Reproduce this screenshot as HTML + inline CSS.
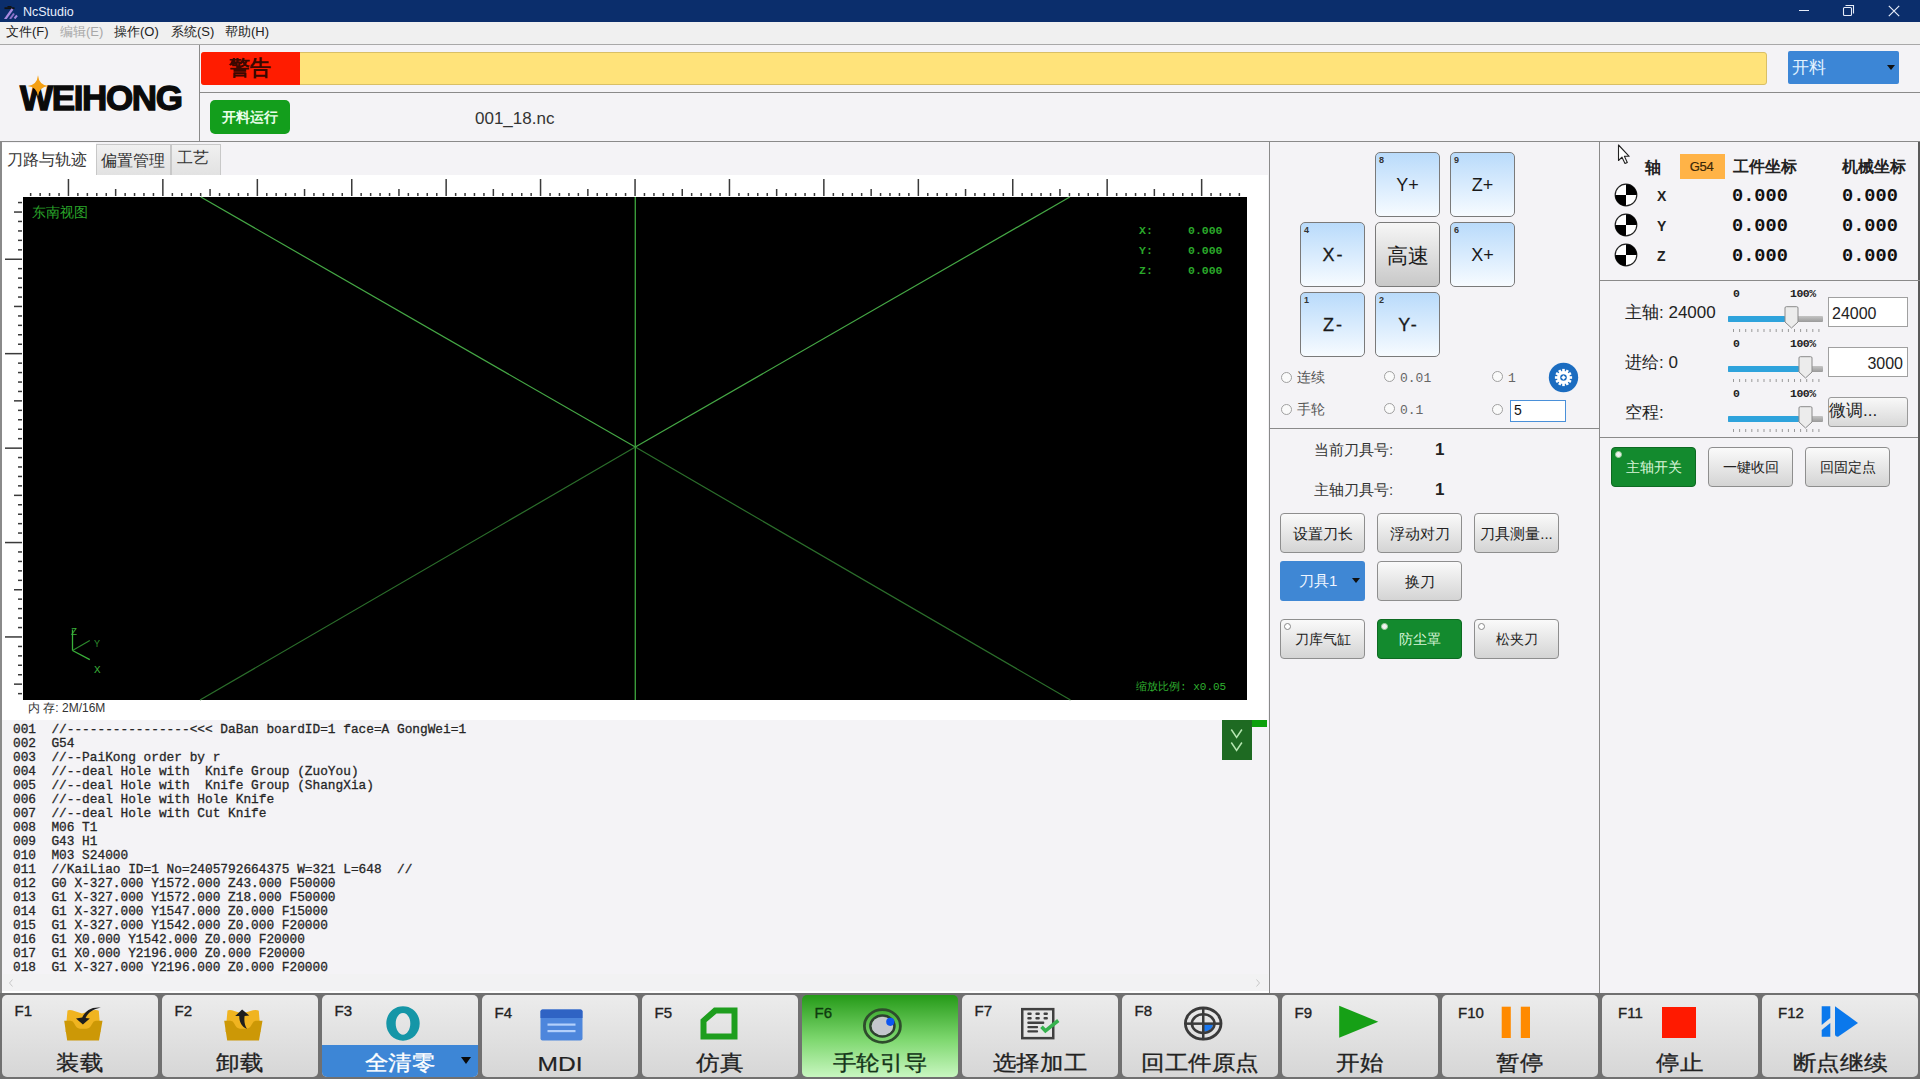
<!DOCTYPE html>
<html><head><meta charset="utf-8">
<style>
*{box-sizing:border-box;margin:0;padding:0}
html,body{width:1920px;height:1079px;overflow:hidden}
body{position:relative;background:#f4f3f6;font-family:"Liberation Sans",sans-serif;color:#222}
.a{position:absolute}
.hl{position:absolute;height:1px;background:#8a8a8a}
.vl{position:absolute;width:1px;background:#8a8a8a}
.mono{font-family:"Liberation Mono",monospace}
.t{position:absolute;white-space:pre;line-height:1}
</style></head><body>
<!-- title bar -->
<div class="a" style="left:0;top:0;width:1920px;height:22px;background:#0b2e6c"></div>
<div class="t" style="left:23px;top:6px;font-size:12.5px;color:#e8eefc">NcStudio</div>
<svg class="a" style="left:2px;top:3px" width="16" height="16" viewBox="0 0 16 16">
<path d="M2.5 5.2 L12.5 5.2" stroke="#111" stroke-width="1.8"/>
<path d="M5.5 3.7 L9.5 3.7" stroke="#111" stroke-width="1.4"/>
<path d="M3 16.5 L10.5 6" stroke="#a88ae0" stroke-width="2.2"/>
<path d="M8 16 L12 10.5" stroke="#8a70c8" stroke-width="2"/>
<path d="M12.5 15.5 L15 12.5" stroke="#a88ae0" stroke-width="2"/></svg>
<div class="a" style="left:1799px;top:10px;width:10px;height:1px;background:#e6ecf8"></div>
<svg class="a" style="left:1842px;top:4px" width="13" height="13" viewBox="0 0 13 13"><path d="M3.5 1.5 L11.5 1.5 L11.5 9.5" fill="none" stroke="#e6ecf8" stroke-width="1.1"/><rect x="1.5" y="3.5" width="8" height="8" rx="1" fill="none" stroke="#e6ecf8" stroke-width="1.1"/></svg>
<svg class="a" style="left:1888px;top:5px" width="12" height="12" viewBox="0 0 12 12"><path d="M0.8 0.8 L11.2 11.2 M11.2 0.8 L0.8 11.2" stroke="#e6ecf8" stroke-width="1.2"/></svg>

<!-- menu -->
<div class="a" style="left:0;top:22px;width:1920px;height:22px;background:#f0f0f0"></div>
<div class="hl" style="left:0;top:44px;width:1920px;background:#a8a8a8"></div>
<div class="t" style="left:6px;top:25px;font-size:13px;color:#222">文件(F)</div>
<div class="t" style="left:60px;top:25px;font-size:13px;color:#a8a8a8">编辑(E)</div>
<div class="t" style="left:114px;top:25px;font-size:13px;color:#222">操作(O)</div>
<div class="t" style="left:171px;top:25px;font-size:13px;color:#222">系统(S)</div>
<div class="t" style="left:225px;top:25px;font-size:13px;color:#222">帮助(H)</div>
<!-- header -->
<div class="vl" style="left:199px;top:45px;height:96px"></div>
<div class="hl" style="left:200px;top:92px;width:1720px"></div>
<div class="hl" style="left:0;top:141px;width:1920px"></div>
<div class="a" style="left:201px;top:52px;width:1566px;height:33px;background:#ffe37a;border-radius:3px;border:1px solid #d9bf66"></div>
<div class="a" style="left:201px;top:52px;width:99px;height:33px;background:#ff1c00;border-radius:3px 0 0 3px"></div>
<div class="t" style="left:229px;top:57px;font-size:21px;font-weight:bold;color:#3a0800">警告</div>
<div class="a" style="left:1788px;top:51px;width:111px;height:33px;background:#3c86d6;border-radius:2px"></div>
<div class="t" style="left:1792px;top:59px;font-size:17px;color:#e2f3ff">开料</div>
<div class="a" style="left:1887px;top:65px;width:0;height:0;border-left:4px solid transparent;border-right:4px solid transparent;border-top:5px solid #111"></div>
<div class="a" style="left:210px;top:100px;width:80px;height:34px;background:#139e1c;border-radius:5px"></div>
<div class="t" style="left:222px;top:110px;font-size:14px;color:#eaffea;font-weight:bold">开料运行</div>
<div class="t" style="left:475px;top:110px;font-size:17px;color:#333">001_18.nc</div>

<!-- logo -->
<div class="t" style="left:20px;top:80px;font-size:35px;font-weight:bold;color:#0a0a0a;letter-spacing:-1.35px;-webkit-text-stroke:1.3px #0a0a0a">WEIHONG</div>
<svg class="a" style="left:27px;top:75px" width="22" height="22" viewBox="-11 -11 22 22"><path d="M0 -10.8 Q0.9 -0.9 10.5 0 Q0.9 0.9 0 10.5 Q-0.9 0.9 -10.5 0 Q-0.9 -0.9 0 -10.8 Z" fill="#f5a012"/></svg>
<!-- tabs -->
<div class="a" style="left:0;top:142px;width:2px;height:851px;background:#8a8a8a"></div>
<div class="a" style="left:96px;top:144px;width:75px;height:31px;background:linear-gradient(#f0f0f0,#e2e2e2);border:1px solid #c8c8c8;border-bottom:none"></div>
<div class="a" style="left:171px;top:144px;width:50px;height:31px;background:linear-gradient(#f0f0f0,#e2e2e2);border:1px solid #c8c8c8;border-bottom:none"></div>
<div class="a" style="left:2px;top:143px;width:94px;height:33px;background:#fff"></div>
<div class="t" style="left:7px;top:152px;font-size:16px;color:#333">刀路与轨迹</div>
<div class="t" style="left:101px;top:153px;font-size:16px;color:#333">偏置管理</div>
<div class="t" style="left:177px;top:150px;font-size:16px;color:#333">工艺</div>
<!-- white canvas area -->
<div class="a" style="left:2px;top:175px;width:1266px;height:545px;background:#fff"></div>
<svg class="a" style="left:0;top:0" width="1270" height="720"><g fill="#3a3a3a"><rect x="29.9" y="193" width="1.5" height="3"/><rect x="39.4" y="193" width="1.5" height="3"/><rect x="48.8" y="193" width="1.5" height="3"/><rect x="58.3" y="193" width="1.5" height="3"/><rect x="67.7" y="179" width="1.5" height="17"/><rect x="77.1" y="193" width="1.5" height="3"/><rect x="86.6" y="193" width="1.5" height="3"/><rect x="96.0" y="193" width="1.5" height="3"/><rect x="105.5" y="193" width="1.5" height="3"/><rect x="114.9" y="189" width="1.5" height="7"/><rect x="124.4" y="193" width="1.5" height="3"/><rect x="133.8" y="193" width="1.5" height="3"/><rect x="143.2" y="193" width="1.5" height="3"/><rect x="152.7" y="193" width="1.5" height="3"/><rect x="162.1" y="179" width="1.5" height="17"/><rect x="171.6" y="193" width="1.5" height="3"/><rect x="181.0" y="193" width="1.5" height="3"/><rect x="190.5" y="193" width="1.5" height="3"/><rect x="199.9" y="193" width="1.5" height="3"/><rect x="209.3" y="189" width="1.5" height="7"/><rect x="218.8" y="193" width="1.5" height="3"/><rect x="228.2" y="193" width="1.5" height="3"/><rect x="237.7" y="193" width="1.5" height="3"/><rect x="247.1" y="193" width="1.5" height="3"/><rect x="256.6" y="179" width="1.5" height="17"/><rect x="266.0" y="193" width="1.5" height="3"/><rect x="275.4" y="193" width="1.5" height="3"/><rect x="284.9" y="193" width="1.5" height="3"/><rect x="294.3" y="193" width="1.5" height="3"/><rect x="303.8" y="189" width="1.5" height="7"/><rect x="313.2" y="193" width="1.5" height="3"/><rect x="322.7" y="193" width="1.5" height="3"/><rect x="332.1" y="193" width="1.5" height="3"/><rect x="341.5" y="193" width="1.5" height="3"/><rect x="351.0" y="179" width="1.5" height="17"/><rect x="360.4" y="193" width="1.5" height="3"/><rect x="369.9" y="193" width="1.5" height="3"/><rect x="379.3" y="193" width="1.5" height="3"/><rect x="388.8" y="193" width="1.5" height="3"/><rect x="398.2" y="189" width="1.5" height="7"/><rect x="407.6" y="193" width="1.5" height="3"/><rect x="417.1" y="193" width="1.5" height="3"/><rect x="426.5" y="193" width="1.5" height="3"/><rect x="436.0" y="193" width="1.5" height="3"/><rect x="445.4" y="179" width="1.5" height="17"/><rect x="454.9" y="193" width="1.5" height="3"/><rect x="464.3" y="193" width="1.5" height="3"/><rect x="473.7" y="193" width="1.5" height="3"/><rect x="483.2" y="193" width="1.5" height="3"/><rect x="492.6" y="189" width="1.5" height="7"/><rect x="502.1" y="193" width="1.5" height="3"/><rect x="511.5" y="193" width="1.5" height="3"/><rect x="521.0" y="193" width="1.5" height="3"/><rect x="530.4" y="193" width="1.5" height="3"/><rect x="539.8" y="179" width="1.5" height="17"/><rect x="549.3" y="193" width="1.5" height="3"/><rect x="558.7" y="193" width="1.5" height="3"/><rect x="568.2" y="193" width="1.5" height="3"/><rect x="577.6" y="193" width="1.5" height="3"/><rect x="587.1" y="189" width="1.5" height="7"/><rect x="596.5" y="193" width="1.5" height="3"/><rect x="606.0" y="193" width="1.5" height="3"/><rect x="615.4" y="193" width="1.5" height="3"/><rect x="624.8" y="193" width="1.5" height="3"/><rect x="634.3" y="179" width="1.5" height="17"/><rect x="643.7" y="193" width="1.5" height="3"/><rect x="653.2" y="193" width="1.5" height="3"/><rect x="662.6" y="193" width="1.5" height="3"/><rect x="672.1" y="193" width="1.5" height="3"/><rect x="681.5" y="189" width="1.5" height="7"/><rect x="690.9" y="193" width="1.5" height="3"/><rect x="700.4" y="193" width="1.5" height="3"/><rect x="709.8" y="193" width="1.5" height="3"/><rect x="719.3" y="193" width="1.5" height="3"/><rect x="728.7" y="179" width="1.5" height="17"/><rect x="738.2" y="193" width="1.5" height="3"/><rect x="747.6" y="193" width="1.5" height="3"/><rect x="757.0" y="193" width="1.5" height="3"/><rect x="766.5" y="193" width="1.5" height="3"/><rect x="775.9" y="189" width="1.5" height="7"/><rect x="785.4" y="193" width="1.5" height="3"/><rect x="794.8" y="193" width="1.5" height="3"/><rect x="804.3" y="193" width="1.5" height="3"/><rect x="813.7" y="193" width="1.5" height="3"/><rect x="823.1" y="179" width="1.5" height="17"/><rect x="832.6" y="193" width="1.5" height="3"/><rect x="842.0" y="193" width="1.5" height="3"/><rect x="851.5" y="193" width="1.5" height="3"/><rect x="860.9" y="193" width="1.5" height="3"/><rect x="870.4" y="189" width="1.5" height="7"/><rect x="879.8" y="193" width="1.5" height="3"/><rect x="889.2" y="193" width="1.5" height="3"/><rect x="898.7" y="193" width="1.5" height="3"/><rect x="908.1" y="193" width="1.5" height="3"/><rect x="917.6" y="179" width="1.5" height="17"/><rect x="927.0" y="193" width="1.5" height="3"/><rect x="936.5" y="193" width="1.5" height="3"/><rect x="945.9" y="193" width="1.5" height="3"/><rect x="955.3" y="193" width="1.5" height="3"/><rect x="964.8" y="189" width="1.5" height="7"/><rect x="974.2" y="193" width="1.5" height="3"/><rect x="983.7" y="193" width="1.5" height="3"/><rect x="993.1" y="193" width="1.5" height="3"/><rect x="1002.6" y="193" width="1.5" height="3"/><rect x="1012.0" y="179" width="1.5" height="17"/><rect x="1021.4" y="193" width="1.5" height="3"/><rect x="1030.9" y="193" width="1.5" height="3"/><rect x="1040.3" y="193" width="1.5" height="3"/><rect x="1049.8" y="193" width="1.5" height="3"/><rect x="1059.2" y="189" width="1.5" height="7"/><rect x="1068.7" y="193" width="1.5" height="3"/><rect x="1078.1" y="193" width="1.5" height="3"/><rect x="1087.5" y="193" width="1.5" height="3"/><rect x="1097.0" y="193" width="1.5" height="3"/><rect x="1106.4" y="179" width="1.5" height="17"/><rect x="1115.9" y="193" width="1.5" height="3"/><rect x="1125.3" y="193" width="1.5" height="3"/><rect x="1134.8" y="193" width="1.5" height="3"/><rect x="1144.2" y="193" width="1.5" height="3"/><rect x="1153.6" y="189" width="1.5" height="7"/><rect x="1163.1" y="193" width="1.5" height="3"/><rect x="1172.5" y="193" width="1.5" height="3"/><rect x="1182.0" y="193" width="1.5" height="3"/><rect x="1191.4" y="193" width="1.5" height="3"/><rect x="1200.9" y="179" width="1.5" height="17"/><rect x="1210.3" y="193" width="1.5" height="3"/><rect x="1219.7" y="193" width="1.5" height="3"/><rect x="1229.2" y="193" width="1.5" height="3"/><rect x="1238.6" y="193" width="1.5" height="3"/><rect x="18" y="201.8" width="4" height="1.5"/><rect x="14" y="211.3" width="8" height="1.5"/><rect x="18" y="220.7" width="4" height="1.5"/><rect x="18" y="230.2" width="4" height="1.5"/><rect x="18" y="239.6" width="4" height="1.5"/><rect x="18" y="249.1" width="4" height="1.5"/><rect x="5" y="258.5" width="17" height="1.5"/><rect x="18" y="267.9" width="4" height="1.5"/><rect x="18" y="277.4" width="4" height="1.5"/><rect x="18" y="286.8" width="4" height="1.5"/><rect x="18" y="296.3" width="4" height="1.5"/><rect x="14" y="305.7" width="8" height="1.5"/><rect x="18" y="315.2" width="4" height="1.5"/><rect x="18" y="324.6" width="4" height="1.5"/><rect x="18" y="334.0" width="4" height="1.5"/><rect x="18" y="343.5" width="4" height="1.5"/><rect x="5" y="352.9" width="17" height="1.5"/><rect x="18" y="362.4" width="4" height="1.5"/><rect x="18" y="371.8" width="4" height="1.5"/><rect x="18" y="381.3" width="4" height="1.5"/><rect x="18" y="390.7" width="4" height="1.5"/><rect x="14" y="400.1" width="8" height="1.5"/><rect x="18" y="409.6" width="4" height="1.5"/><rect x="18" y="419.0" width="4" height="1.5"/><rect x="18" y="428.5" width="4" height="1.5"/><rect x="18" y="437.9" width="4" height="1.5"/><rect x="5" y="447.4" width="17" height="1.5"/><rect x="18" y="456.8" width="4" height="1.5"/><rect x="18" y="466.2" width="4" height="1.5"/><rect x="18" y="475.7" width="4" height="1.5"/><rect x="18" y="485.1" width="4" height="1.5"/><rect x="14" y="494.6" width="8" height="1.5"/><rect x="18" y="504.0" width="4" height="1.5"/><rect x="18" y="513.5" width="4" height="1.5"/><rect x="18" y="522.9" width="4" height="1.5"/><rect x="18" y="532.3" width="4" height="1.5"/><rect x="5" y="541.8" width="17" height="1.5"/><rect x="18" y="551.2" width="4" height="1.5"/><rect x="18" y="560.7" width="4" height="1.5"/><rect x="18" y="570.1" width="4" height="1.5"/><rect x="18" y="579.6" width="4" height="1.5"/><rect x="14" y="589.0" width="8" height="1.5"/><rect x="18" y="598.4" width="4" height="1.5"/><rect x="18" y="607.9" width="4" height="1.5"/><rect x="18" y="617.3" width="4" height="1.5"/><rect x="18" y="626.8" width="4" height="1.5"/><rect x="5" y="636.2" width="17" height="1.5"/><rect x="18" y="645.7" width="4" height="1.5"/><rect x="18" y="655.1" width="4" height="1.5"/><rect x="18" y="664.5" width="4" height="1.5"/><rect x="18" y="674.0" width="4" height="1.5"/><rect x="14" y="683.4" width="8" height="1.5"/><rect x="18" y="692.9" width="4" height="1.5"/></g></svg>
<div class="a" style="left:23px;top:197px;width:1224px;height:503px;background:#000"></div>
<svg class="a" style="left:0;top:0" width="1270" height="720">
<line x1="200.8" y1="197" x2="635.3" y2="447.1" stroke="#45a845" stroke-width="1.2"/>
<line x1="635.3" y1="447.1" x2="1069.8" y2="197" stroke="#45a845" stroke-width="1.2"/>
<line x1="200" y1="700" x2="635.3" y2="447.1" stroke="#2b6e2b" stroke-width="1.2"/>
<line x1="635.3" y1="447.1" x2="1070.5" y2="700" stroke="#2b6e2b" stroke-width="1.2"/>
<line x1="635.3" y1="197" x2="635.3" y2="700" stroke="#3a9a3a" stroke-width="1.4"/>
<line x1="72.5" y1="629.5" x2="72.5" y2="650.5" stroke="#3ab03a" stroke-width="1.3"/>
<line x1="72.5" y1="650.5" x2="89.8" y2="640.4" stroke="#2c8a2c" stroke-width="1.1"/>
<line x1="72.5" y1="650.5" x2="89.8" y2="659.6" stroke="#3ab03a" stroke-width="1.3"/>
</svg>
<div class="t" style="left:32px;top:205px;font-size:14px;color:#2aa52a">东南视图</div>
<div class="t mono" style="left:71px;top:628px;font-size:10px;color:#3ab03a">Z</div>
<div class="t mono" style="left:94px;top:640px;font-size:10px;color:#2c8a2c">Y</div>
<div class="t mono" style="left:94px;top:665px;font-size:11px;color:#3ab03a">X</div>
<div class="t mono" style="left:1139px;top:221px;font-size:11.5px;font-weight:bold;color:#2aa82a;line-height:20px">X:<br>Y:<br>Z:</div>
<div class="t mono" style="left:1188px;top:221px;font-size:11.5px;font-weight:bold;color:#2aa82a;line-height:20px">0.000<br>0.000<br>0.000</div>
<div class="t" style="left:1136px;top:681px;font-size:11px;color:#2fb02f">缩放比例<span class="mono">: x0.05</span></div>
<div class="t" style="left:28px;top:702px;font-size:12px;color:#333">内 存: 2M/16M</div>

<!-- code area -->
<div class="a" style="left:3px;top:720px;width:1265px;height:254px;background:#f4f3f6"></div>
<div class="a" style="left:3px;top:974px;width:1265px;height:17px;background:#f2f2f3"></div>
<div class="a" style="left:2px;top:991px;width:1268px;height:2px;background:#fff"></div><svg class="a" style="left:0;top:974px" width="1270" height="17"><path d="M12.5 5.5 L9.5 9 L12.5 12.5 M1256.5 5.5 L1259.5 9 L1256.5 12.5" fill="none" stroke="#c8c8c8" stroke-width="1"/></svg>
<div class="t mono" style="left:13px;top:723px;font-size:12.8px;line-height:14px;color:#262626;-webkit-text-stroke:0.3px #262626">001  //----------------&lt;&lt;&lt; DaBan boardID=1 face=A GongWei=1
002  G54
003  //--PaiKong order by r
004  //--deal Hole with  Knife Group (ZuoYou)
005  //--deal Hole with  Knife Group (ShangXia)
006  //--deal Hole with Hole Knife
007  //--deal Hole with Cut Knife
008  M06 T1
009  G43 H1
010  M03 S24000
011  //KaiLiao ID=1 No=2405792664375 W=321 L=648  //
012  G0 X-327.000 Y1572.000 Z43.000 F50000
013  G1 X-327.000 Y1572.000 Z18.000 F50000
014  G1 X-327.000 Y1547.000 Z0.000 F15000
015  G1 X-327.000 Y1542.000 Z0.000 F20000
016  G1 X0.000 Y1542.000 Z0.000 F20000
017  G1 X0.000 Y2196.000 Z0.000 F20000
018  G1 X-327.000 Y2196.000 Z0.000 F20000</div>
<div class="a" style="left:1222px;top:720px;width:30px;height:40px;background:#1e6a22"></div>
<svg class="a" style="left:1222px;top:720px" width="30" height="40"><path d="M9.3 9.5 L14.6 17.5 L19.9 9.5 M9.3 22.5 L14.6 30.5 L19.9 22.5" fill="none" stroke="#b5e6b0" stroke-width="1.5"/></svg>
<div class="a" style="left:1252px;top:720px;width:15px;height:7px;background:#0ba00b"></div>

<!-- panel lines -->
<div class="a" style="left:1269px;top:142px;width:1px;height:851px;background:#8a8a8a"></div>
<div class="a" style="left:1599px;top:142px;width:1px;height:851px;background:#8a8a8a"></div>
<div class="a" style="left:1918px;top:142px;width:2px;height:851px;background:#5a5a5a"></div>
<div class="a" style="left:1375px;top:152px;width:65px;height:65px;border:1.5px solid #7a7a7a;border-radius:5px;background:linear-gradient(#b9dbfb,#f7fbff)"></div><div class="t" style="left:1379px;top:156px;font-size:9px;font-weight:bold;color:#333">8</div><div class="t" style="left:1375px;top:176px;width:65px;text-align:center;font-size:18px;color:#1a1a1a">Y+</div><div class="a" style="left:1450px;top:152px;width:65px;height:65px;border:1.5px solid #7a7a7a;border-radius:5px;background:linear-gradient(#b9dbfb,#f7fbff)"></div><div class="t" style="left:1454px;top:156px;font-size:9px;font-weight:bold;color:#333">9</div><div class="t" style="left:1450px;top:176px;width:65px;text-align:center;font-size:18px;color:#1a1a1a">Z+</div><div class="a" style="left:1300px;top:222px;width:65px;height:65px;border:1.5px solid #7a7a7a;border-radius:5px;background:linear-gradient(#b9dbfb,#f7fbff)"></div><div class="t" style="left:1304px;top:226px;font-size:9px;font-weight:bold;color:#333">4</div><div class="t" style="left:1300px;top:246px;width:65px;text-align:center;font-size:18px;color:#1a1a1a;letter-spacing:2px;text-indent:2px;-webkit-text-stroke:0.3px #1a1a1a">X-</div><div class="a" style="left:1375px;top:222px;width:65px;height:65px;border:1.5px solid #7a7a7a;border-radius:5px;background:linear-gradient(#f6f6f6,#c8c8c8)"></div><div class="t" style="left:1375px;top:246px;width:65px;text-align:center;font-size:20.5px;color:#1a1a1a">高速</div><div class="a" style="left:1450px;top:222px;width:65px;height:65px;border:1.5px solid #7a7a7a;border-radius:5px;background:linear-gradient(#b9dbfb,#f7fbff)"></div><div class="t" style="left:1454px;top:226px;font-size:9px;font-weight:bold;color:#333">6</div><div class="t" style="left:1450px;top:246px;width:65px;text-align:center;font-size:18px;color:#1a1a1a">X+</div><div class="a" style="left:1300px;top:292px;width:65px;height:65px;border:1.5px solid #7a7a7a;border-radius:5px;background:linear-gradient(#b9dbfb,#f7fbff)"></div><div class="t" style="left:1304px;top:296px;font-size:9px;font-weight:bold;color:#333">1</div><div class="t" style="left:1300px;top:316px;width:65px;text-align:center;font-size:18px;color:#1a1a1a;letter-spacing:2px;text-indent:2px;-webkit-text-stroke:0.3px #1a1a1a">Z-</div><div class="a" style="left:1375px;top:292px;width:65px;height:65px;border:1.5px solid #7a7a7a;border-radius:5px;background:linear-gradient(#b9dbfb,#f7fbff)"></div><div class="t" style="left:1379px;top:296px;font-size:9px;font-weight:bold;color:#333">2</div><div class="t" style="left:1375px;top:316px;width:65px;text-align:center;font-size:18px;color:#1a1a1a;letter-spacing:2px;text-indent:2px;-webkit-text-stroke:0.3px #1a1a1a">Y-</div>
<div class="a" style="left:1280.5px;top:371.5px;width:11px;height:11px;border:1px solid #a0a0a0;border-radius:50%;background:#fafafa"></div><div class="t" style="left:1297px;top:370px;font-size:14px;color:#555">连续</div>
<div class="a" style="left:1383.5px;top:370.5px;width:11px;height:11px;border:1px solid #a0a0a0;border-radius:50%;background:#fafafa"></div><div class="t mono" style="left:1400px;top:372px;font-size:13px;color:#666">0.01</div>
<div class="a" style="left:1491.5px;top:370.5px;width:11px;height:11px;border:1px solid #a0a0a0;border-radius:50%;background:#fafafa"></div><div class="t mono" style="left:1508px;top:372px;font-size:13px;color:#666">1</div>
<div class="a" style="left:1280.5px;top:403.5px;width:11px;height:11px;border:1px solid #a0a0a0;border-radius:50%;background:#fafafa"></div><div class="t" style="left:1297px;top:402px;font-size:14px;color:#555">手轮</div>
<div class="a" style="left:1383.5px;top:402.5px;width:11px;height:11px;border:1px solid #a0a0a0;border-radius:50%;background:#fafafa"></div><div class="t mono" style="left:1400px;top:404px;font-size:13px;color:#666">0.1</div>
<div class="a" style="left:1491.5px;top:403.5px;width:11px;height:11px;border:1px solid #a0a0a0;border-radius:50%;background:#fafafa"></div>
<div class="a" style="left:1510px;top:400px;width:56px;height:22px;border:1.5px solid #4a90d9;background:#fff"></div>
<div class="t" style="left:1514px;top:403px;font-size:14px;color:#111">5</div>
<svg class="a" style="left:1548px;top:362px" width="31" height="31" viewBox="0 0 31 31">
<circle cx="15.5" cy="15.5" r="14.7" fill="#1b6cc0"/>
<g fill="#fff" transform="translate(15.5 15.5)">
<circle r="6.4"/><rect x="-1.3" y="-8.6" width="2.6" height="4" transform="rotate(0)"/><rect x="-1.3" y="-8.6" width="2.6" height="4" transform="rotate(30)"/><rect x="-1.3" y="-8.6" width="2.6" height="4" transform="rotate(60)"/><rect x="-1.3" y="-8.6" width="2.6" height="4" transform="rotate(90)"/><rect x="-1.3" y="-8.6" width="2.6" height="4" transform="rotate(120)"/><rect x="-1.3" y="-8.6" width="2.6" height="4" transform="rotate(150)"/><rect x="-1.3" y="-8.6" width="2.6" height="4" transform="rotate(180)"/><rect x="-1.3" y="-8.6" width="2.6" height="4" transform="rotate(210)"/><rect x="-1.3" y="-8.6" width="2.6" height="4" transform="rotate(240)"/><rect x="-1.3" y="-8.6" width="2.6" height="4" transform="rotate(270)"/><rect x="-1.3" y="-8.6" width="2.6" height="4" transform="rotate(300)"/><rect x="-1.3" y="-8.6" width="2.6" height="4" transform="rotate(330)"/></g>
<circle cx="15.5" cy="15.5" r="3.3" fill="#1b6cc0"/><rect x="13.9" y="13.9" width="3.2" height="3.2" fill="#fff" transform="rotate(45 15.5 15.5)"/></svg>
<div class="a" style="left:1270px;top:428px;width:329px;height:1px;background:#8a8a8a"></div>

<!-- right panel -->
<svg class="a" style="left:1617px;top:144px" width="16" height="22" viewBox="0 0 16 22"><path d="M1.5 1 L1.5 16.5 L5 13.2 L8 19.5 L10.3 18.4 L7.4 12.3 L12.2 12.3 Z" fill="#fff" stroke="#222" stroke-width="1.1" stroke-linejoin="round"/></svg>
<div class="t" style="left:1645px;top:159.5px;font-size:16px;font-weight:bold;color:#222">轴</div>
<div class="a" style="left:1680px;top:154px;width:45px;height:25px;background:#ffb347"></div>
<div class="t" style="left:1679px;top:160px;width:45px;text-align:center;font-size:13px;color:#3b2808;letter-spacing:-0.3px;-webkit-text-stroke:0.2px #3b2808">G54</div>
<div class="t" style="left:1733px;top:159px;font-size:16px;font-weight:bold;color:#222">工件坐标</div>
<div class="t" style="left:1842px;top:159px;font-size:16px;font-weight:bold;color:#222">机械坐标</div>
<svg class="a" style="left:1614px;top:183px" width="24" height="24" viewBox="-12 -12 24 24">
<circle r="10.8" fill="#fff" stroke="#222" stroke-width="1.2"/>
<path d="M0 0 L0 -10.8 A10.8 10.8 0 0 1 10.8 0 Z" fill="#000"/>
<path d="M0 0 L0 10.8 A10.8 10.8 0 0 1 -10.8 0 Z" fill="#000"/></svg><svg class="a" style="left:1614px;top:213px" width="24" height="24" viewBox="-12 -12 24 24">
<circle r="10.8" fill="#fff" stroke="#222" stroke-width="1.2"/>
<path d="M0 0 L0 -10.8 A10.8 10.8 0 0 1 10.8 0 Z" fill="#000"/>
<path d="M0 0 L0 10.8 A10.8 10.8 0 0 1 -10.8 0 Z" fill="#000"/></svg><svg class="a" style="left:1614px;top:243px" width="24" height="24" viewBox="-12 -12 24 24">
<circle r="10.8" fill="#fff" stroke="#222" stroke-width="1.2"/>
<path d="M0 0 L0 -10.8 A10.8 10.8 0 0 1 10.8 0 Z" fill="#000"/>
<path d="M0 0 L0 10.8 A10.8 10.8 0 0 1 -10.8 0 Z" fill="#000"/></svg>
<div class="t" style="left:1657px;top:181px;font-size:14px;font-weight:bold;color:#222;line-height:30px">X<br>Y<br>Z</div>
<div class="t mono" style="left:1732px;top:182px;font-size:18.6px;font-weight:bold;color:#111;line-height:30px">0.000<br>0.000<br>0.000</div>
<div class="t mono" style="left:1842px;top:182px;font-size:18.6px;font-weight:bold;color:#111;line-height:30px">0.000<br>0.000<br>0.000</div>
<div class="a" style="left:1600px;top:280px;width:1318px;height:1px;background:#8a8a8a"></div>
<div class="t" style="left:1625px;top:304px;font-size:17px;color:#222">主轴: 24000</div>
<div class="t" style="left:1625px;top:354px;font-size:17px;color:#222">进给: 0</div>
<div class="t" style="left:1625px;top:404px;font-size:17px;color:#222">空程:</div>

<div class="t mono" style="left:1733px;top:288px;font-size:11.5px;font-weight:bold;color:#222">0</div>
<div class="t mono" style="left:1790px;top:288px;font-size:11.5px;font-weight:bold;color:#222;letter-spacing:-0.5px">100%</div>
<div class="a" style="left:1728px;top:315.5px;width:95px;height:6px;background:linear-gradient(#c4c4c4,#9a9a9a);border-radius:1px"></div>
<div class="a" style="left:1728px;top:315.5px;width:57px;height:6px;background:#2ea3dc;border-radius:1px"></div>
<svg class="a" style="left:1784px;top:305.5px" width="15" height="23" viewBox="0 0 15 23"><path d="M1 2 Q1 0.7 2.3 0.7 L12.7 0.7 Q14 0.7 14 2 L14 16 L7.5 22 L1 16 Z" fill="#ececec" stroke="#8a8a8a" stroke-width="1"/></svg>
<svg class="a" style="left:0;top:329px" width="1830" height="4"><g fill="#9a9a9a"><rect x="1733.0" y="0" width="1" height="3"/><rect x="1739.1" y="0" width="1" height="3"/><rect x="1745.2" y="0" width="1" height="3"/><rect x="1751.3" y="0" width="1" height="3"/><rect x="1757.4" y="0" width="1" height="3"/><rect x="1763.5" y="0" width="1" height="3"/><rect x="1769.6" y="0" width="1" height="3"/><rect x="1775.7" y="0" width="1" height="3"/><rect x="1781.8" y="0" width="1" height="3"/><rect x="1787.9" y="0" width="1" height="3"/><rect x="1794.0" y="0" width="1" height="3"/><rect x="1800.1" y="0" width="1" height="3"/><rect x="1806.2" y="0" width="1" height="3"/><rect x="1812.3" y="0" width="1" height="3"/><rect x="1818.4" y="0" width="1" height="3"/></g></svg>

<div class="t mono" style="left:1733px;top:338px;font-size:11.5px;font-weight:bold;color:#222">0</div>
<div class="t mono" style="left:1790px;top:338px;font-size:11.5px;font-weight:bold;color:#222;letter-spacing:-0.5px">100%</div>
<div class="a" style="left:1728px;top:365.5px;width:95px;height:6px;background:linear-gradient(#c4c4c4,#9a9a9a);border-radius:1px"></div>
<div class="a" style="left:1728px;top:365.5px;width:71px;height:6px;background:#2ea3dc;border-radius:1px"></div>
<svg class="a" style="left:1798px;top:355.5px" width="15" height="23" viewBox="0 0 15 23"><path d="M1 2 Q1 0.7 2.3 0.7 L12.7 0.7 Q14 0.7 14 2 L14 16 L7.5 22 L1 16 Z" fill="#ececec" stroke="#8a8a8a" stroke-width="1"/></svg>
<svg class="a" style="left:0;top:379px" width="1830" height="4"><g fill="#9a9a9a"><rect x="1733.0" y="0" width="1" height="3"/><rect x="1739.1" y="0" width="1" height="3"/><rect x="1745.2" y="0" width="1" height="3"/><rect x="1751.3" y="0" width="1" height="3"/><rect x="1757.4" y="0" width="1" height="3"/><rect x="1763.5" y="0" width="1" height="3"/><rect x="1769.6" y="0" width="1" height="3"/><rect x="1775.7" y="0" width="1" height="3"/><rect x="1781.8" y="0" width="1" height="3"/><rect x="1787.9" y="0" width="1" height="3"/><rect x="1794.0" y="0" width="1" height="3"/><rect x="1800.1" y="0" width="1" height="3"/><rect x="1806.2" y="0" width="1" height="3"/><rect x="1812.3" y="0" width="1" height="3"/><rect x="1818.4" y="0" width="1" height="3"/></g></svg>

<div class="t mono" style="left:1733px;top:388px;font-size:11.5px;font-weight:bold;color:#222">0</div>
<div class="t mono" style="left:1790px;top:388px;font-size:11.5px;font-weight:bold;color:#222;letter-spacing:-0.5px">100%</div>
<div class="a" style="left:1728px;top:415.5px;width:95px;height:6px;background:linear-gradient(#c4c4c4,#9a9a9a);border-radius:1px"></div>
<div class="a" style="left:1728px;top:415.5px;width:71px;height:6px;background:#2ea3dc;border-radius:1px"></div>
<svg class="a" style="left:1798px;top:405.5px" width="15" height="23" viewBox="0 0 15 23"><path d="M1 2 Q1 0.7 2.3 0.7 L12.7 0.7 Q14 0.7 14 2 L14 16 L7.5 22 L1 16 Z" fill="#ececec" stroke="#8a8a8a" stroke-width="1"/></svg>
<svg class="a" style="left:0;top:429px" width="1830" height="4"><g fill="#9a9a9a"><rect x="1733.0" y="0" width="1" height="3"/><rect x="1739.1" y="0" width="1" height="3"/><rect x="1745.2" y="0" width="1" height="3"/><rect x="1751.3" y="0" width="1" height="3"/><rect x="1757.4" y="0" width="1" height="3"/><rect x="1763.5" y="0" width="1" height="3"/><rect x="1769.6" y="0" width="1" height="3"/><rect x="1775.7" y="0" width="1" height="3"/><rect x="1781.8" y="0" width="1" height="3"/><rect x="1787.9" y="0" width="1" height="3"/><rect x="1794.0" y="0" width="1" height="3"/><rect x="1800.1" y="0" width="1" height="3"/><rect x="1806.2" y="0" width="1" height="3"/><rect x="1812.3" y="0" width="1" height="3"/><rect x="1818.4" y="0" width="1" height="3"/></g></svg>

<div class="a" style="left:1828px;top:297px;width:80px;height:30px;background:#fff;border:1px solid #a0a0a0"></div>
<div class="t" style="left:1832px;top:306px;font-size:16px;color:#222">24000</div>
<div class="a" style="left:1828px;top:347px;width:80px;height:30px;background:#fff;border:1px solid #a0a0a0"></div>
<div class="t" style="left:1828px;top:356px;width:75px;text-align:right;font-size:16px;color:#222">3000</div>
<div class="a" style="left:1828px;top:397px;width:80px;height:30px;background:linear-gradient(#f8f8f8,#d8d8d8);border:1px solid #9a9a9a;border-radius:3px"></div>
<div class="t" style="left:1829px;top:402px;font-size:17px;color:#222">微调...</div>
<div class="a" style="left:1600px;top:437px;width:318px;height:1px;background:#8a8a8a"></div>

<div class="a" style="left:1611px;top:447px;width:85px;height:40px;background:#138a2e;border:1px solid #0d6a22;border-radius:4px"></div><div class="a" style="left:1615px;top:451px;width:7px;height:7px;border-radius:50%;background:#f0f0f0;border:1px solid #9ad09a"></div><div class="t" style="left:1611px;top:460.0px;width:85px;text-align:center;font-size:14px;color:#d8f5d8">主轴开关</div>
<div class="a" style="left:1708px;top:447px;width:85px;height:40px;background:linear-gradient(#fafafa,#d4d4d4);border:1px solid #8e8e8e;border-radius:4px"></div><div class="t" style="left:1708px;top:460.0px;width:85px;text-align:center;font-size:14px;color:#222">一键收回</div>
<div class="a" style="left:1805px;top:447px;width:85px;height:40px;background:linear-gradient(#fafafa,#d4d4d4);border:1px solid #8e8e8e;border-radius:4px"></div><div class="t" style="left:1805px;top:460.0px;width:85px;text-align:center;font-size:14px;color:#222">回固定点</div>
<div class="t" style="left:1314px;top:442px;font-size:15px;color:#333">当前刀具号:</div>
<div class="t" style="left:1314px;top:482px;font-size:15px;color:#333">主轴刀具号:</div>
<div class="t" style="left:1435px;top:441px;font-size:17px;font-weight:bold;color:#222">1</div>
<div class="t" style="left:1435px;top:481px;font-size:17px;font-weight:bold;color:#222">1</div>
<div class="a" style="left:1280px;top:513px;width:85px;height:40px;background:linear-gradient(#fafafa,#d4d4d4);border:1px solid #8e8e8e;border-radius:4px"></div><div class="t" style="left:1280px;top:525.5px;width:85px;text-align:center;font-size:15px;color:#222">设置刀长</div>
<div class="a" style="left:1377px;top:513px;width:85px;height:40px;background:linear-gradient(#fafafa,#d4d4d4);border:1px solid #8e8e8e;border-radius:4px"></div><div class="t" style="left:1377px;top:525.5px;width:85px;text-align:center;font-size:15px;color:#222">浮动对刀</div>
<div class="a" style="left:1474px;top:513px;width:85px;height:40px;background:linear-gradient(#fafafa,#d4d4d4);border:1px solid #8e8e8e;border-radius:4px"></div><div class="t" style="left:1474px;top:525.5px;width:85px;text-align:center;font-size:15px;color:#222">刀具测量...</div>
<div class="a" style="left:1280px;top:561px;width:85px;height:40px;background:#3f87d4;border-radius:3px"></div>
<div class="t" style="left:1299px;top:573px;font-size:15px;color:#eef5ff">刀具1</div>
<div class="a" style="left:1352px;top:578px;width:0;height:0;border-left:4px solid transparent;border-right:4px solid transparent;border-top:5px solid #111"></div>
<div class="a" style="left:1377px;top:561px;width:85px;height:40px;background:linear-gradient(#fafafa,#d4d4d4);border:1px solid #8e8e8e;border-radius:4px"></div><div class="t" style="left:1377px;top:573.5px;width:85px;text-align:center;font-size:15px;color:#222">换刀</div>
<div class="a" style="left:1280px;top:619px;width:85px;height:40px;background:linear-gradient(#fafafa,#d4d4d4);border:1px solid #8e8e8e;border-radius:4px"></div><div class="a" style="left:1284px;top:623px;width:7px;height:7px;border-radius:50%;background:#fff;border:1px solid #888"></div><div class="t" style="left:1280px;top:632.0px;width:85px;text-align:center;font-size:14px;color:#222">刀库气缸</div>
<div class="a" style="left:1377px;top:619px;width:85px;height:40px;background:#138a2e;border:1px solid #0d6a22;border-radius:4px"></div><div class="a" style="left:1381px;top:623px;width:7px;height:7px;border-radius:50%;background:#f0f0f0;border:1px solid #9ad09a"></div><div class="t" style="left:1377px;top:632.0px;width:85px;text-align:center;font-size:14px;color:#d8f5d8">防尘罩</div>
<div class="a" style="left:1474px;top:619px;width:85px;height:40px;background:linear-gradient(#fafafa,#d4d4d4);border:1px solid #8e8e8e;border-radius:4px"></div><div class="a" style="left:1478px;top:623px;width:7px;height:7px;border-radius:50%;background:#fff;border:1px solid #888"></div><div class="t" style="left:1474px;top:632.0px;width:85px;text-align:center;font-size:14px;color:#222">松夹刀</div>
<div class="a" style="left:0;top:993px;width:1920px;height:86px;background:#707070"></div>
<div class="a" style="left:1.5px;top:995px;width:156px;height:82px;background:linear-gradient(#ececec,#d6d6d6);border-radius:5px"></div>
<div class="t" style="left:14.5px;top:1002.5px;font-size:15px;color:#222;-webkit-text-stroke:0.35px #222">F1</div>
<svg class="a" style="left:55px;top:1000px" width="60" height="45" viewBox="0 0 60 45"><path d="M12.5 10.6 Q14 9.6 17 10.3 L27 13.5 L38 10.3 Q42 9.6 43.8 10.8 L45.5 32 L10.5 32 Z" fill="#f0b420"/>
<path d="M9.2 20.8 L15.5 20.8 Q18 20.8 19.5 24 Q21.5 28.6 25 28.7 L31.5 28.7 Q35 28.6 37 24 Q38.5 20.8 41 20.8 L47.5 20.8 L44 40.4 L12.2 40.4 Z" fill="#cc9806"/>
<path d="M45.8 7.6 C37 6.8 30.5 10 27.2 17.6 L21 18.6 L27.9 24.4 L34.8 18.6 L30.6 17.9 C33 12.5 38.5 9.3 45.8 7.6 Z" fill="#1e1e1e"/></svg>
<div class="t" style="left:1.5px;top:1052px;width:156px;text-align:center;font-size:21px;color:#222;transform:scaleX(1.12);-webkit-text-stroke:0.3px #222">装载</div>
<div class="a" style="left:161.5px;top:995px;width:156px;height:82px;background:linear-gradient(#ececec,#d6d6d6);border-radius:5px"></div>
<div class="t" style="left:174.5px;top:1002.5px;font-size:15px;color:#222;-webkit-text-stroke:0.35px #222">F2</div>
<svg class="a" style="left:215px;top:1000px" width="60" height="45" viewBox="0 0 60 45"><path d="M12.5 10.6 Q14 9.6 17 10.3 L27 13.5 L38 10.3 Q42 9.6 43.8 10.8 L45.5 32 L10.5 32 Z" fill="#f0b420"/>
<path d="M9.2 20.8 L15.5 20.8 Q18 20.8 19.5 24 Q21.5 28.6 25 28.7 L31.5 28.7 Q35 28.6 37 24 Q38.5 20.8 41 20.8 L47.5 20.8 L44 40.4 L12.2 40.4 Z" fill="#cc9806"/>
<path d="M27.1 9.4 L20.2 15.9 L24.3 15.9 C24 21.5 26.5 26.8 32 29 C29.5 25.5 29 21 29.6 15.9 L34.3 15.5 Z" fill="#1e1e1e"/></svg>
<div class="t" style="left:161.5px;top:1052px;width:156px;text-align:center;font-size:21px;color:#222;transform:scaleX(1.12);-webkit-text-stroke:0.3px #222">卸载</div>
<div class="a" style="left:321.5px;top:995px;width:156px;height:82px;background:linear-gradient(#ececec,#d6d6d6);border-radius:5px"></div>
<div class="t" style="left:334.5px;top:1002.5px;font-size:15px;color:#222;-webkit-text-stroke:0.35px #222">F3</div>
<svg class="a" style="left:386px;top:1006px" width="34" height="35" viewBox="0 0 34 35">
<path fill-rule="evenodd" fill="#1596a7" d="M17 0.3 C26.5 0.3 33.7 8 33.7 17.5 C33.7 27 26.5 34.7 17 34.7 C7.5 34.7 0.3 27 0.3 17.5 C0.3 8 7.5 0.3 17 0.3 Z M17 7 C13 7 9.7 11.5 9.7 17.5 C9.7 23.5 13 28.7 17 28.7 C21 28.7 24.3 23.5 24.3 17.5 C24.3 11.5 21 7 17 7 Z"/></svg>
<div class="a" style="left:321.5px;top:1045px;width:156px;height:32px;background:#3d86d6;border-radius:0 0 5px 5px"></div>
<div class="a" style="left:461px;top:1057px;width:0;height:0;border-left:5.5px solid transparent;border-right:5.5px solid transparent;border-top:7.5px solid #0a0a0a"></div>
<div class="t" style="left:321.5px;top:1052px;width:156px;text-align:center;font-size:21px;color:#fff;transform:scaleX(1.12);-webkit-text-stroke:0.3px #fff">全清零</div>
<div class="a" style="left:481.5px;top:995px;width:156px;height:82px;background:linear-gradient(#ececec,#d6d6d6);border-radius:5px"></div>
<div class="t" style="left:494.5px;top:1004.5px;font-size:15px;color:#222;-webkit-text-stroke:0.35px #222">F4</div>
<svg class="a" style="left:540px;top:1009px" width="43" height="32" viewBox="0 0 43 32">
<rect x="0.5" y="0.5" width="42" height="31" rx="2" fill="#4d86dc"/>
<path d="M0.5 9 L0.5 2.5 Q0.5 0.5 2.5 0.5 L40.5 0.5 Q42.5 0.5 42.5 2.5 L42.5 9 Z" fill="#2f63c4"/>
<rect x="7.5" y="14.5" width="28" height="2.2" fill="#b3d0fb"/>
<rect x="7.5" y="21" width="28" height="2.2" fill="#b3d0fb"/></svg>
<div class="t" style="left:481.5px;top:1053px;width:156px;text-align:center;font-size:21px;color:#222;transform:scaleX(1.17);-webkit-text-stroke:0.2px #222">MDI</div>
<div class="a" style="left:641.5px;top:995px;width:156px;height:82px;background:linear-gradient(#ececec,#d6d6d6);border-radius:5px"></div>
<div class="t" style="left:654.5px;top:1004.5px;font-size:15px;color:#222;-webkit-text-stroke:0.35px #222">F5</div>
<svg class="a" style="left:700px;top:1007px" width="38" height="33" viewBox="0 0 38 33">
<path fill-rule="evenodd" fill="#1e9e1e" d="M14 0.5 L37.5 0.5 L37.5 32.5 L0.5 32.5 L0.5 12.5 Z M16.5 6.5 L6.5 15 L6.5 26.5 L31.5 26.5 L31.5 6.5 Z"/></svg>
<div class="t" style="left:641.5px;top:1052px;width:156px;text-align:center;font-size:21px;color:#222;transform:scaleX(1.12);-webkit-text-stroke:0.3px #222">仿真</div>
<div class="a" style="left:801.5px;top:995px;width:156px;height:82px;background:linear-gradient(#259a18,#7fd870 55%,#c8f6c0);border-radius:5px"></div>
<div class="t" style="left:814.5px;top:1004.5px;font-size:15px;color:#0e3a0e;-webkit-text-stroke:0.35px #0e3a0e">F6</div>
<svg class="a" style="left:862px;top:1006px" width="42" height="40" viewBox="-20.4 -20 42 40">
<ellipse rx="18" ry="16.3" fill="none" stroke="#2e4d2c" stroke-width="2.8"/>
<ellipse rx="12" ry="10.4" fill="none" stroke="#2e4030" stroke-width="2.6"/>
<ellipse rx="10.8" ry="9.2" fill="#c3c6cc"/>
<circle cx="7.9" cy="-4.2" r="4.1" fill="#0d55f0"/></svg>
<div class="t" style="left:801.5px;top:1052px;width:156px;text-align:center;font-size:21px;color:#15351a;transform:scaleX(1.12);-webkit-text-stroke:0.3px #15351a">手轮引导</div>
<div class="a" style="left:961.5px;top:995px;width:156px;height:82px;background:linear-gradient(#ececec,#d6d6d6);border-radius:5px"></div>
<div class="t" style="left:974.5px;top:1002.5px;font-size:15px;color:#222;-webkit-text-stroke:0.35px #222">F7</div>
<svg class="a" style="left:1020px;top:1007px" width="42" height="34" viewBox="0 0 42 34">
<rect x="2.25" y="2.15" width="31" height="29" fill="#e6e6e6" stroke="#404040" stroke-width="2.5"/>
<g fill="#404040"><rect x="7.3" y="5.6" width="4.4" height="2.5" rx="1"/><rect x="15.4" y="5.6" width="4.4" height="2.5" rx="1"/><rect x="23.5" y="5.6" width="4.4" height="2.5" rx="1"/>
<rect x="7.3" y="10.1" width="4.4" height="2.5" rx="1"/><rect x="15.4" y="10.1" width="4.4" height="2.5" rx="1"/><rect x="23.5" y="10.1" width="4.4" height="2.5" rx="1"/>
<rect x="7.3" y="14.6" width="17" height="2.3" rx="1"/><rect x="7.3" y="18.9" width="10.8" height="2.3" rx="1"/><rect x="7.3" y="23.2" width="10.8" height="2.3" rx="1"/></g>
<path d="M21.5 19.8 L25.4 23.8 L38.3 13.5" fill="none" stroke="#36b24e" stroke-width="3.6"/></svg>
<div class="t" style="left:961.5px;top:1052px;width:156px;text-align:center;font-size:21px;color:#222;transform:scaleX(1.12);-webkit-text-stroke:0.3px #222">选择加工</div>
<div class="a" style="left:1121.5px;top:995px;width:156px;height:82px;background:linear-gradient(#ececec,#d6d6d6);border-radius:5px"></div>
<div class="t" style="left:1134.5px;top:1002.5px;font-size:15px;color:#222;-webkit-text-stroke:0.35px #222">F8</div>
<svg class="a" style="left:1182px;top:1003px" width="42" height="42" viewBox="-21.2 -20.6 42 42">
<path d="M0 0 L10 0 A10 8.5 0 0 1 0 8.5 Z" fill="#1a78f0"/>
<ellipse rx="17.8" ry="15.6" fill="none" stroke="#3a3a3a" stroke-width="2.8"/>
<ellipse rx="11.3" ry="9.4" fill="none" stroke="#3a3a3a" stroke-width="2.6"/>
<rect x="-18.5" y="-1.2" width="37" height="2.5" fill="#3a3a3a"/>
<rect x="-1.2" y="-16.5" width="2.5" height="33" fill="#3a3a3a"/></svg>
<div class="t" style="left:1121.5px;top:1052px;width:156px;text-align:center;font-size:21px;color:#222;transform:scaleX(1.12);-webkit-text-stroke:0.3px #222">回工件原点</div>
<div class="a" style="left:1281.5px;top:995px;width:156px;height:82px;background:linear-gradient(#ececec,#d6d6d6);border-radius:5px"></div>
<div class="t" style="left:1294.5px;top:1004.5px;font-size:15px;color:#222;-webkit-text-stroke:0.35px #222">F9</div>
<svg class="a" style="left:1338px;top:1005px" width="42" height="34" viewBox="0 0 42 34">
<path d="M1.2 0.8 L40.3 16.7 L1.2 32.8 Z" fill="#16a016"/></svg>
<div class="t" style="left:1281.5px;top:1052px;width:156px;text-align:center;font-size:21px;color:#222;transform:scaleX(1.12);-webkit-text-stroke:0.3px #222">开始</div>
<div class="a" style="left:1441.5px;top:995px;width:156px;height:82px;background:linear-gradient(#ececec,#d6d6d6);border-radius:5px"></div>
<div class="t" style="left:1458.0px;top:1004.5px;font-size:15px;color:#222;-webkit-text-stroke:0.35px #222">F10</div>
<svg class="a" style="left:1500px;top:1006px" width="32" height="33" viewBox="0 0 32 33">
<rect x="1.7" y="0.7" width="9.1" height="31.3" fill="#ff8a00"/><rect x="20.8" y="0.7" width="9.2" height="31.3" fill="#ff8a00"/></svg>
<div class="t" style="left:1441.5px;top:1052px;width:156px;text-align:center;font-size:21px;color:#222;transform:scaleX(1.12);-webkit-text-stroke:0.3px #222">暂停</div>
<div class="a" style="left:1601.5px;top:995px;width:156px;height:82px;background:linear-gradient(#ececec,#d6d6d6);border-radius:5px"></div>
<div class="t" style="left:1618.0px;top:1004.5px;font-size:15px;color:#222;-webkit-text-stroke:0.35px #222">F11</div>
<div class="a" style="left:1662px;top:1007px;width:34px;height:31px;background:#ff1a00"></div>
<div class="t" style="left:1601.5px;top:1052px;width:156px;text-align:center;font-size:21px;color:#222;transform:scaleX(1.12);-webkit-text-stroke:0.3px #222">停止</div>
<div class="a" style="left:1761.5px;top:995px;width:156px;height:82px;background:linear-gradient(#ececec,#d6d6d6);border-radius:5px"></div>
<div class="t" style="left:1778.0px;top:1004.5px;font-size:15px;color:#222;-webkit-text-stroke:0.35px #222">F12</div>
<svg class="a" style="left:1820px;top:1005px" width="40" height="34" viewBox="0 0 40 34">
<path d="M1.7 1.2 L10.3 1.2 L10.3 13 L1.7 20 Z" fill="#0a78ec"/>
<path d="M10.3 18 L10.3 31.7 L1.7 31.7 L1.7 25 Z" fill="#0a78ec"/>
<path d="M15 1.2 L38 17.9 L18 31.7 Q15 31.7 15 29 Z" fill="#0a78ec"/></svg>
<div class="t" style="left:1761.5px;top:1052px;width:156px;text-align:center;font-size:21px;color:#222;transform:scaleX(1.12);-webkit-text-stroke:0.3px #222">断点继续</div></body></html>
